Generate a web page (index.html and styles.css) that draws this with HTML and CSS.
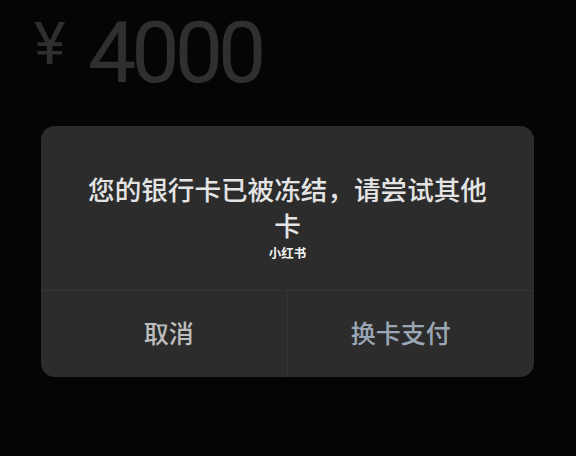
FILE: index.html
```html
<!DOCTYPE html>
<html lang="zh">
<head>
<meta charset="utf-8">
<link rel="stylesheet" href="styles.css">
</head>
<body>
<div class="screen">
  <div class="amount">
    <span class="currency">¥</span>
    <span class="value">4000</span>
  </div>
  <div class="dialog">
    <div class="message">
      <p class="text">您的银行卡已被冻结，请尝试其他卡</p>
      <p class="mark">小红书</p>
    </div>
    <div class="actions">
      <div class="btn cancel">取消</div>
      <div class="btn confirm">换卡支付</div>
    </div>
  </div>
</div>
</body>
</html>
```

FILE: styles.css
```css
html, body {
  margin: 0;
  padding: 0;
  background: #050505;
}
.screen {
  width: 576px;
  height: 456px;
  overflow: hidden;
  font-family: "Noto Sans CJK SC", "Noto Sans", sans-serif;
}
.amount {
  display: flex;
  align-items: flex-start;
  height: 126px;
  padding-left: 34px;
  box-sizing: border-box;
  color: #2f2f2f;
  font-family: Roboto, "Noto Sans", sans-serif;
}
.currency {
  font-size: 60px;
  line-height: 1;
  margin-top: 14px;
  width: 54px;
}
.value {
  font-size: 86px;
  line-height: 1;
  margin-top: 10px;
  letter-spacing: -5px;
}
.dialog {
  margin-left: 41px;
  width: 493px;
  height: 251px;
  background: #2c2c2c;
  border-radius: 14px;
  display: flex;
  flex-direction: column;
  overflow: hidden;
}
.message {
  height: 165px;
  box-sizing: border-box;
  padding: 45px 36px 0;
  border-bottom: 1px solid #363636;
  text-align: center;
}
.text {
  margin: 0;
  font-size: 26.6px;
  font-weight: 500;
  line-height: 36px;
  color: #e4e4e4;
}
.mark {
  margin: 3px 0 0;
  font-size: 12.5px;
  line-height: 14px;
  font-weight: 700;
  color: #f2f2f2;
}
.actions {
  flex: 1;
  display: flex;
}
.btn {
  flex: none;
  width: 50%;
  box-sizing: border-box;
  display: flex;
  align-items: center;
  justify-content: center;
  font-size: 25px;
  font-weight: 500;
  padding-bottom: 4px;
}
.cancel {
  color: #bdbdbd;
  border-right: 1px solid #363636;
  padding-left: 10px;
}
.confirm {
  color: #9ba7b6;
  padding-right: 20px;
}
```
